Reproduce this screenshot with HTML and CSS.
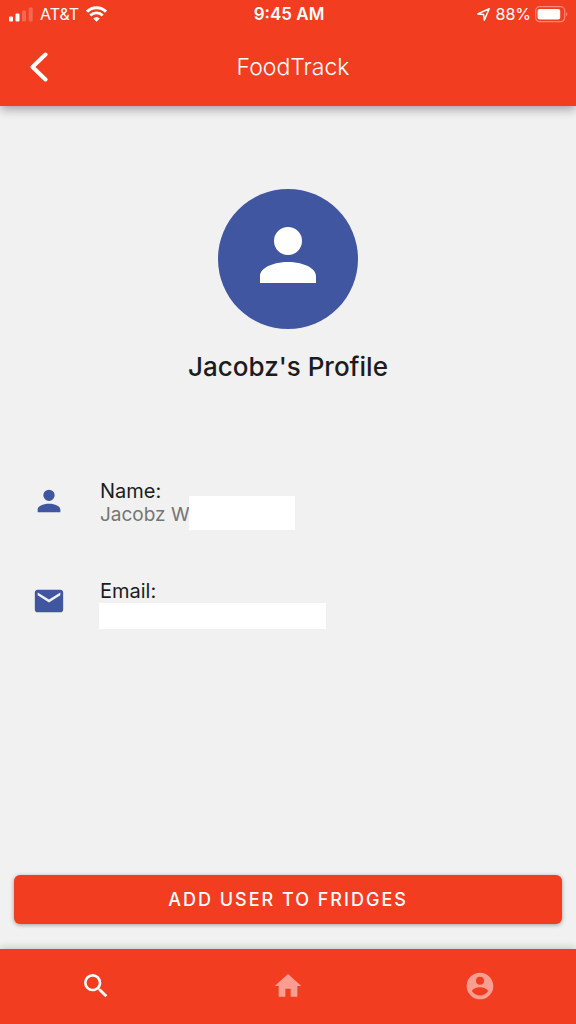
FILE: index.html
```html
<!DOCTYPE html>
<html lang="en">
<head>
<meta charset="utf-8">
<meta name="viewport" content="width=device-width, initial-scale=1">
<title>FoodTrack</title>
<link rel="stylesheet" href="styles.css">
</head>
<body>
<header class="header">
  <div class="status">
    <div class="status-side">
      <svg class="signal" viewBox="0 0 24 15" aria-hidden="true">
        <rect x="0" y="9.5" width="4" height="5" rx="1"/>
        <rect x="6.5" y="6.5" width="4" height="8" rx="1"/>
        <rect x="13" y="3.5" width="4" height="11" rx="1" opacity=".22"/>
        <rect x="19.7" y=".5" width="4" height="14" rx="1" opacity=".22"/>
      </svg>
      <span class="carrier">AT&amp;T</span>
      <svg class="wifi" viewBox="0 0 21 16" aria-hidden="true">
        <path d="M1 5.7a13.6 13.6 0 0 1 19 0" fill="none" stroke="#fff" stroke-width="3"/>
        <path d="M4.3 9.4a9 9 0 0 1 12.4 0" fill="none" stroke="#fff" stroke-width="2.8"/>
        <path d="M7.2 12.6a4.8 4.8 0 0 1 6.6 0L10.5 15.8z"/>
      </svg>
    </div>
    <span class="time">9:45 AM</span>
    <div class="status-side status-right">
      <svg class="location" viewBox="0 0 15 15" aria-hidden="true">
        <path d="M13.2 1.7L1.7 6.9L7.6 7.4L8.3 13.2z" fill="none" stroke="#fff" stroke-width="1.5" stroke-linejoin="round"/>
      </svg>
      <span class="percent">88%</span>
      <svg class="battery" viewBox="0 0 34 17" aria-hidden="true">
        <rect x=".7" y=".7" width="29" height="15" rx="4" fill="none" stroke="#fff" stroke-width="1.2" opacity=".4"/>
        <rect x="2.6" y="2.9" width="22.6" height="10.6" rx="2"/>
        <path d="M31.3 5.8q2.2 2.2 0 4.8z" opacity=".45"/>
      </svg>
    </div>
  </div>
  <div class="navbar">
    <button class="back" type="button" aria-label="Back">
      <svg viewBox="0 0 18 30" aria-hidden="true"><path d="M15.5 2.5L2.5 15L15.5 27.5" fill="none" stroke="#fff" stroke-width="4" stroke-linecap="round" stroke-linejoin="round"/></svg>
    </button>
    <h1 class="title">FoodTrack</h1>
  </div>
</header>

<main class="content">
  <div class="avatar">
    <svg viewBox="0 0 24 24" aria-hidden="true"><path d="M12,4A4,4 0 0,1 16,8A4,4 0 0,1 12,12A4,4 0 0,1 8,8A4,4 0 0,1 12,4M12,14C16.42,14 20,15.79 20,18V20H4V18C4,15.79 7.58,14 12,14Z"/></svg>
  </div>
  <h2 class="profile-name">Jacobz's Profile</h2>
  <dl class="details">
    <div class="detail">
      <svg class="detail-icon" viewBox="0 0 24 24" aria-hidden="true"><path d="M12,4A4,4 0 0,1 16,8A4,4 0 0,1 12,12A4,4 0 0,1 8,8A4,4 0 0,1 12,4M12,14C16.42,14 20,15.79 20,18V20H4V18C4,15.79 7.58,14 12,14Z"/></svg>
      <div class="detail-text">
        <dt>Name:</dt>
        <dd>Jacobz W<span class="mask mask-name"></span></dd>
      </div>
    </div>
    <div class="detail">
      <svg class="detail-icon" viewBox="0 0 24 24" aria-hidden="true"><path d="M20,8L12,13L4,8V6L12,11L20,6M20,4H4C2.89,4 2,4.89 2,6V18A2,2 0 0,0 4,20H20A2,2 0 0,0 22,18V6C22,4.89 21.1,4 20,4Z"/></svg>
      <div class="detail-text">
        <dt>Email:</dt>
        <dd><span class="mask mask-email"></span></dd>
      </div>
    </div>
  </dl>
  <button class="add-button" type="button">ADD USER TO FRIDGES</button>
</main>

<nav class="tabs">
  <a class="tab active" href="#search" aria-label="Search"><svg viewBox="0 0 24 24" aria-hidden="true"><path d="M9.5,3A6.5,6.5 0 0,1 16,9.5C16,11.11 15.41,12.59 14.44,13.73L14.71,14H15.5L20.5,19L19,20.5L14,15.5V14.71L13.73,14.44C12.59,15.41 11.11,16 9.5,16A6.5,6.5 0 0,1 3,9.5A6.5,6.5 0 0,1 9.5,3M9.5,5C7,5 5,7 5,9.5C5,12 7,14 9.5,14C12,14 14,12 14,9.5C14,7 12,5 9.5,5Z"/></svg></a>
  <a class="tab" href="#home" aria-label="Home"><svg viewBox="0 0 24 24" aria-hidden="true"><path d="M10,20V14H14V20H19V12H22L12,3L2,12H5V20H10Z"/></svg></a>
  <a class="tab" href="#account" aria-label="Account"><svg viewBox="0 0 24 24" aria-hidden="true"><path d="M12,19.2C9.5,19.2 7.29,17.92 6,16C6.03,14 10,12.9 12,12.9C14,12.9 17.97,14 18,16C16.71,17.92 14.5,19.2 12,19.2M12,5A3,3 0 0,1 15,8A3,3 0 0,1 12,11A3,3 0 0,1 9,8A3,3 0 0,1 12,5M12,2A10,10 0 0,0 2,12A10,10 0 0,0 12,22A10,10 0 0,0 22,12C22,6.47 17.5,2 12,2Z"/></svg></a>
</nav>
</body>
</html>
```

FILE: styles.css
```css
:root {
  --red: #f33d20;
  --blue: #4056a1;
}

* {
  box-sizing: border-box;
}

body {
  margin: 0;
  min-height: 100vh;
  display: flex;
  flex-direction: column;
  background: #f1f1f1;
  color: #1c1c1e;
  font-family: Inter, "Liberation Sans", sans-serif;
}

h1, h2, dl, dt, dd {
  margin: 0;
  font-weight: 400;
}

svg {
  display: block;
  fill: currentColor;
}

button {
  font-family: inherit;
  border: 0;
  cursor: pointer;
}

.header {
  background: var(--red);
  color: #fff;
  box-shadow: 0 3px 10px rgba(0, 0, 0, .36);
}

.status {
  display: grid;
  grid-template-columns: 1fr auto 1fr;
  align-items: center;
  height: 28px;
  padding: 0 7px 0 9px;
  font-size: 16px;
  line-height: 20px;
}

.status-side {
  display: flex;
  align-items: center;
  gap: 7px;
}

.status-right {
  justify-content: flex-end;
  gap: 4px;
}

.signal {
  width: 24px;
  height: 15px;
}

.wifi {
  width: 21px;
  height: 16px;
}

.location {
  width: 15px;
  height: 15px;
}

.battery {
  width: 34px;
  height: 17px;
}

.time {
  font-size: 17px;
  font-weight: 600;
}

.navbar {
  display: grid;
  grid-template-columns: 1fr auto 1fr;
  align-items: center;
  height: 78px;
  padding: 0 20px 0 30px;
}

.back {
  justify-self: start;
  padding: 0;
  background: none;
  color: #fff;
}

.back svg {
  width: 18px;
  height: 30px;
}

.title {
  font-size: 23px;
  line-height: 28px;
  font-weight: 300;
}

.content {
  flex: 1;
  display: flex;
  flex-direction: column;
  align-items: center;
  padding: 83px 14px 25px;
}

.avatar {
  display: grid;
  place-items: center;
  width: 140px;
  height: 140px;
  padding-bottom: 8px;
  border-radius: 50%;
  background: var(--blue);
  color: #fff;
}

.avatar svg {
  width: 84px;
  height: 84px;
}

.profile-name {
  margin-top: 20px;
  font-size: 26px;
  line-height: 36px;
  font-weight: 500;
}

.details {
  align-self: stretch;
  display: flex;
  flex-direction: column;
  gap: 52px;
  margin-top: 94px;
  padding: 0 18px;
}

.detail {
  display: flex;
  align-items: flex-start;
  gap: 34px;
}

.detail-icon {
  width: 34px;
  height: 34px;
  margin-top: 5px;
  color: var(--blue);
}

.detail-text {
  font-size: 20px;
  line-height: 24px;
}

.detail-text dd {
  position: relative;
  min-height: 24px;
  font-size: 19px;
  color: #757575;
}

.mask {
  position: absolute;
  background: #fff;
}

.mask-name {
  top: -7px;
  left: 89px;
  width: 106px;
  height: 34px;
}

.mask-email {
  top: 0;
  left: -1px;
  width: 227px;
  height: 26px;
}

.add-button {
  align-self: stretch;
  margin-top: auto;
  padding: 12px;
  border-radius: 6px;
  background: var(--red);
  color: #fff;
  font-size: 18px;
  line-height: 25px;
  font-weight: 500;
  letter-spacing: 2px;
  box-shadow: 0 1px 4px rgba(0, 0, 0, .35);
}

.tabs {
  display: grid;
  grid-template-columns: repeat(3, 1fr);
  height: 75px;
  padding-bottom: 2px;
  background: var(--red);
  box-shadow: 0 -1px 8px rgba(0, 0, 0, .2);
}

.tab {
  display: grid;
  place-items: center;
  color: rgba(255, 255, 255, .5);
}

.tab.active {
  color: #fff;
}

.tab svg {
  width: 32px;
  height: 32px;
}
```
